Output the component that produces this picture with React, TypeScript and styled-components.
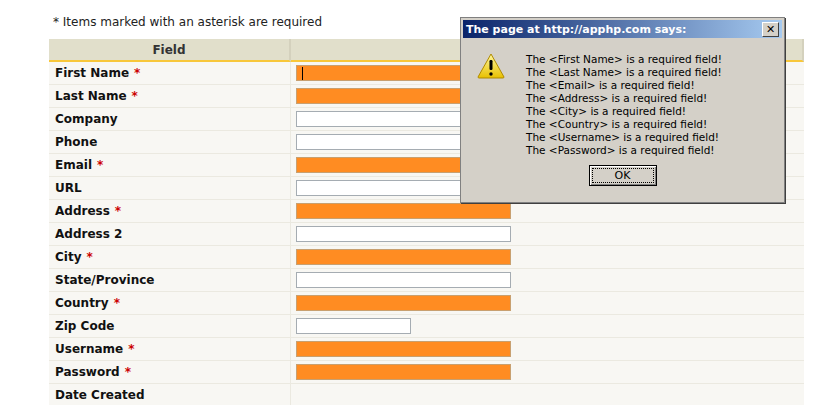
import React from "react";
import styled, { createGlobalStyle } from "styled-components";

const Global = createGlobalStyle`
  body { margin: 0; background: #fff; font-family: "DejaVu Sans", Verdana, sans-serif; }
`;

const Page = styled.div`
  position: relative;
  width: 815px;
  height: 405px;
  overflow: hidden;
  padding: 15px 0 0 49px;
  box-sizing: border-box;
`;

const Note = styled.div`
  font-size: 12px;
  color: #222;
  padding-left: 4px;
  height: 24px;
  span { color: #c00; }
`;

const Table = styled.div`
  width: 755px;
  display: grid;
  grid-template-columns: 242px 1fr;
`;

const Head = styled.div`
  background: #e1dfcb;
  height: 21px;
  border-bottom: 2px solid #f8c73a;
  border-right: 2px solid #d4d1bd;
  font-size: 12px;
  font-weight: bold;
  color: #333;
  display: flex;
  align-items: center;
  justify-content: center;
  &:last-of-type { border-right: none; }
`;

const Label = styled.div`
  background: #f8f7f3;
  height: 22px;
  border-bottom: 1px solid #ebe9e0;
  border-right: 1px solid #ebe9e0;
  font-size: 12px;
  font-weight: bold;
  color: #111;
  display: flex;
  align-items: center;
  padding-left: 6px;
  span { color: #c00; margin-left: 5px; }
`;

const Cell = styled.div`
  background: #f8f7f3;
  height: 22px;
  border-bottom: 1px solid #ebe9e0;
  display: flex;
  align-items: center;
  padding-left: 5px;
`;

const Input = styled.div<{ $req: boolean; $w: number }>`
  width: ${(p) => p.$w}px;
  height: 16px;
  box-sizing: border-box;
  border: 1px solid ${(p) => (p.$req ? "#c8a070" : "#a5acb2")};
  background: ${(p) => (p.$req ? "#ff8c22" : "#fff")};
  position: relative;
`;

const Caret = styled.div`
  position: absolute;
  left: 5px;
  top: 1px;
  width: 1px;
  height: 13px;
  background: #000;
`;

const Dialog = styled.div`
  position: absolute;
  left: 460px;
  top: 17px;
  width: 323px;
  height: 184px;
  background: #d4d0c8;
  border: 1px solid #808080;
  box-shadow: 1px 1px 0 #404040;
  font-family: Tahoma, "DejaVu Sans", sans-serif;
  display: flex;
  flex-direction: column;
`;

const Title = styled.div`
  height: 18px;
  margin: 2px 2px 0 2px;
  background: linear-gradient(90deg, #0a246a, #a6caf0);
  color: #fff;
  font-weight: bold;
  font-size: 11px;
  display: flex;
  align-items: center;
  justify-content: space-between;
  padding: 0 3px;
`;

const Close = styled.div`
  width: 15px;
  height: 13px;
  background: #d4d0c8;
  border: 1px solid;
  border-color: #fff #404040 #404040 #fff;
  color: #000;
  font-size: 11px;
  display: flex;
  align-items: center;
  justify-content: center;
`;

const Body = styled.div`
  display: flex;
  padding: 15px 0 0 16px;
  gap: 21px;
`;

const Msgs = styled.div`
  font-size: 10.5px;
  line-height: 13px;
  color: #000;
`;

const Ok = styled.div`
  margin: 8px auto 0;
  width: 66px;
  height: 19px;
  border: 1px solid #000;
  box-shadow: inset 1px 1px 0 #fff, inset -1px -1px 0 #808080;
  font-size: 11px;
  display: flex;
  align-items: center;
  justify-content: center;
  outline: 1px dotted #000;
  outline-offset: -4px;
`;

const rows: [string, boolean, number][] = [
  ["First Name", true, 215],
  ["Last Name", true, 215],
  ["Company", false, 215],
  ["Phone", false, 215],
  ["Email", true, 215],
  ["URL", false, 215],
  ["Address", true, 215],
  ["Address 2", false, 215],
  ["City", true, 215],
  ["State/Province", false, 215],
  ["Country", true, 215],
  ["Zip Code", false, 115],
  ["Username", true, 215],
  ["Password", true, 215],
  ["Date Created", false, 0],
];

const msgs = ["First Name", "Last Name", "Email", "Address", "City", "Country", "Username", "Password"];

export default function App() {
  return (
    <>
      <Global />
      <Page>
        <Note>* Items marked with an asterisk are required</Note>
        <Table>
          <Head>Field</Head>
          <Head />
          {rows.map(([l, r, w], i) => (
            <React.Fragment key={l}>
              <Label>
                {l}
                {r && <span>*</span>}
              </Label>
              <Cell>
                {w > 0 && (
                  <Input $req={r} $w={w}>
                    {i === 0 && <Caret />}
                  </Input>
                )}
              </Cell>
            </React.Fragment>
          ))}
        </Table>
        <Dialog>
          <Title>
            The page at http://apphp.com says:
            <Close>✕</Close>
          </Title>
          <Body>
            <svg width="28" height="26" viewBox="0 0 28 26">
              <defs>
                <linearGradient id="g" x1="0" y1="0" x2="0" y2="1">
                  <stop offset="0" stopColor="#fff8a0" />
                  <stop offset="1" stopColor="#e8c000" />
                </linearGradient>
              </defs>
              <path d="M14 1 L27 24 Q27 25 26 25 L2 25 Q1 25 1 24 Z" fill="url(#g)" stroke="#b08a00" strokeWidth="1" />
              <rect x="12.5" y="7" width="3" height="10" rx="1.2" fill="#000" />
              <circle cx="14" cy="21" r="1.7" fill="#000" />
            </svg>
            <Msgs>
              {msgs.map((m) => (
                <div key={m}>{`The <${m}> is a required field!`}</div>
              ))}
            </Msgs>
          </Body>
          <Ok>OK</Ok>
        </Dialog>
      </Page>
    </>
  );
}
